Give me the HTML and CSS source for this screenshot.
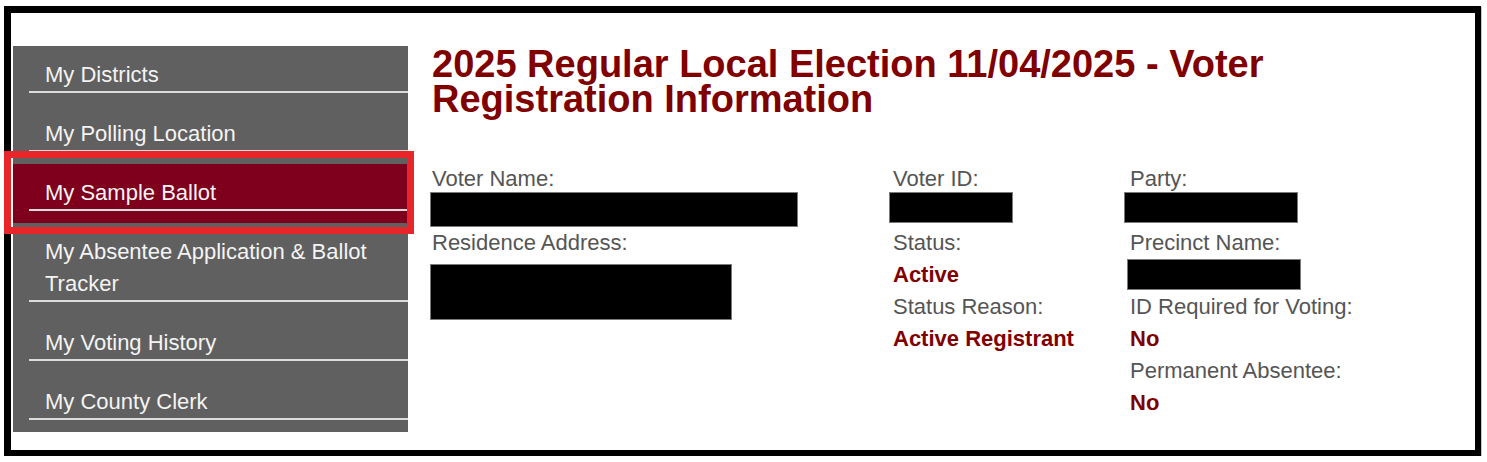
FILE: index.html
```html
<!DOCTYPE html>
<html lang="en">
<head>
<meta charset="utf-8">
<title>Voter Registration Information</title>
<link rel="stylesheet" href="styles.css">
</head>
<body>
<div class="frame">
  <nav class="sidebar">
    <ul class="menu">
      <li class="menu-item"><a class="menu-link" href="#">My Districts</a></li>
      <li class="menu-item"><a class="menu-link" href="#">My Polling Location</a></li>
      <li class="menu-item active"><a class="menu-link" href="#">My Sample Ballot</a></li>
      <li class="menu-item"><a class="menu-link" href="#">My Absentee Application &amp; Ballot Tracker</a></li>
      <li class="menu-item"><a class="menu-link" href="#">My Voting History</a></li>
      <li class="menu-item"><a class="menu-link" href="#">My County Clerk</a></li>
    </ul>
  </nav>
  <main class="content">
    <h1 class="title">2025 Regular Local Election 11/04/2025 - Voter Registration Information</h1>
    <div class="details">
      <div class="col">
        <div class="label">Voter Name:</div>
        <div class="value"><span class="redact r-name"></span></div>
        <div class="label">Residence Address:</div>
        <div class="value"><span class="redact r-address"></span></div>
      </div>
      <div class="col">
        <div class="label">Voter ID:</div>
        <div class="value"><span class="redact r-id"></span></div>
        <div class="label">Status:</div>
        <div class="value strong">Active</div>
        <div class="label">Status Reason:</div>
        <div class="value strong">Active Registrant</div>
      </div>
      <div class="col">
        <div class="label">Party:</div>
        <div class="value"><span class="redact r-party"></span></div>
        <div class="label">Precinct Name:</div>
        <div class="value"><span class="redact r-precinct"></span></div>
        <div class="label">ID Required for Voting:</div>
        <div class="value strong">No</div>
        <div class="label">Permanent Absentee:</div>
        <div class="value strong">No</div>
      </div>
    </div>
  </main>
</div>
</body>
</html>
```

FILE: styles.css
```css
* { box-sizing: border-box; }

html, body {
  margin: 0;
  padding: 0;
  background: #ffffff;
}

body {
  font-family: "Liberation Sans", Arial, sans-serif;
  font-size: 22px;
  color: #555555;
}

.frame {
  margin: 6px 0 0 4px;
  width: 1477px;
  height: 450px;
  border-style: solid;
  border-color: #000000;
  border-width: 7px 6px 6px 7px;
  box-shadow: 1px 1px 0 #c8c8c8;
  background: #ffffff;
  padding: 33px 0 0 2px;
  display: flex;
  align-items: flex-start;
}

/* Sidebar */
.sidebar {
  width: 395px;
  flex: 0 0 395px;
  background: #606060;
}

.menu {
  list-style: none;
  margin: 0;
  padding: 0;
}

.menu-item {
  position: relative;
  padding: 13px 0 12px 0;
}

.menu-item.active {
  background: #7e001d;
}

.menu-item.active::after {
  content: "";
  position: absolute;
  top: -13px;
  bottom: -11px;
  left: -9px;
  right: -6px;
  border: 7px solid #e8262a;
  pointer-events: none;
}

.menu-link {
  display: block;
  margin-left: 16px;
  padding-left: 16px;
  padding-right: 12px;
  line-height: 32px;
  color: #f4f4f4;
  text-decoration: none;
  border-bottom: 2px solid #dcdcdc;
}

/* Content */
.content {
  flex: 1 1 auto;
  margin-left: 24px;
  padding-right: 10px;
}

.title {
  margin: 1px 0 0 0;
  font-size: 38px;
  line-height: 35px;
  font-weight: bold;
  color: #800000;
}

.details {
  margin-top: 46px;
  display: grid;
  grid-template-columns: 461px 237px 1fr;
}

.col {
  display: flex;
  flex-direction: column;
}

.label,
.value {
  height: 32px;
  line-height: 32px;
  white-space: nowrap;
}

.value.strong {
  font-weight: bold;
  color: #800000;
}

.redact {
  display: block;
  background: #000000;
  border: 1px solid #7a7a7a;
}

.r-name {
  width: 368px;
  height: 35px;
  margin: -3px 0 0 -2px;
}

.r-address {
  width: 302px;
  height: 56px;
  margin: 5px 0 0 -2px;
}

.r-id {
  width: 124px;
  height: 31px;
  margin: -3px 0 0 -4px;
}

.r-party {
  width: 174px;
  height: 31px;
  margin: -3px 0 0 -6px;
}

.r-precinct {
  width: 174px;
  height: 31px;
  margin: 0 0 0 -3px;
}
```
